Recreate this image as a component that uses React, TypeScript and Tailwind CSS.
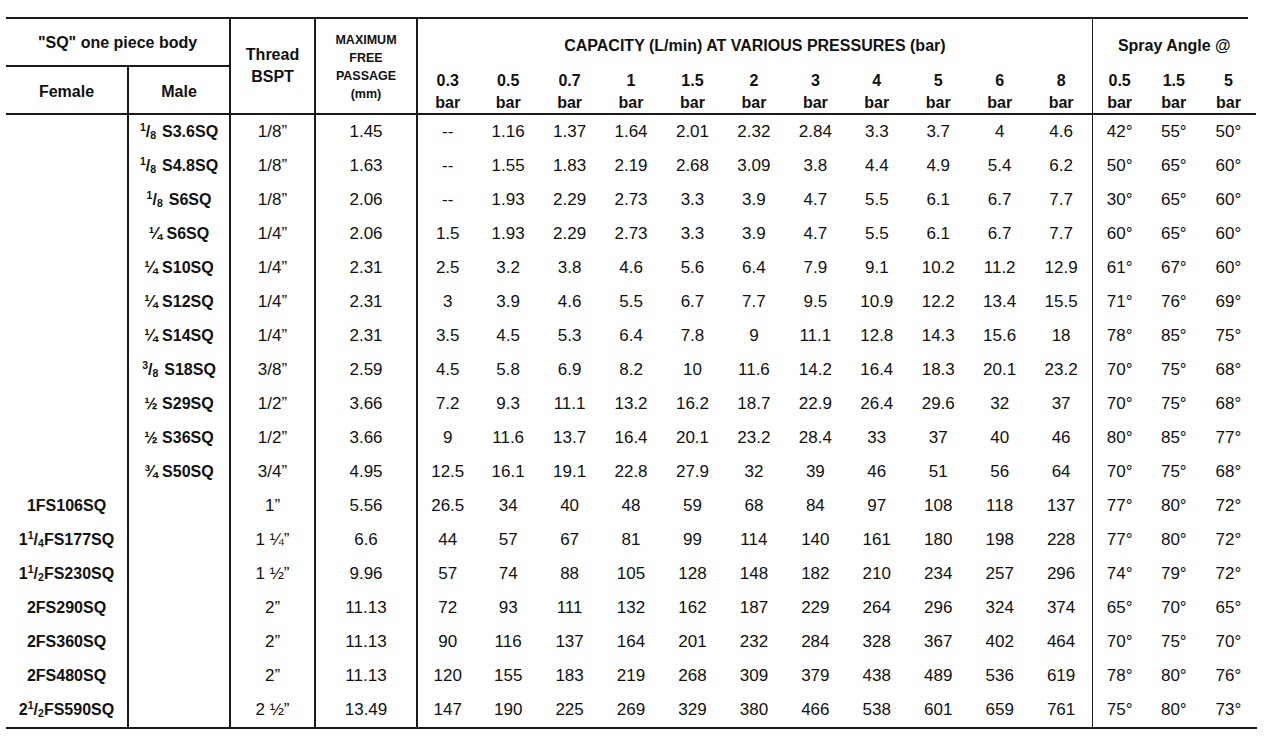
import React from "react";

type Row = {
  female?: React.ReactNode;
  male?: React.ReactNode;
  thread: string;
  pass: string;
  cap: string[];
  spray: string[];
};

const Frac = ({ n, d, gap }: { n: string; d: string; gap?: boolean }) => (
  <span className={gap ? "mr-[6px]" : ""}>
    <sup className="text-[10.5px] top-[-0.6em]">{n}</sup>/<sub className="text-[10.5px] bottom-[-0.2em]">{d}</sub>
  </span>
);

const rows: Row[] = [
  { male: <><Frac n="1" d="8" gap />S3.6SQ</>, thread: "1/8”", pass: "1.45", cap: ["--", "1.16", "1.37", "1.64", "2.01", "2.32", "2.84", "3.3", "3.7", "4", "4.6"], spray: ["42°", "55°", "50°"] },
  { male: <><Frac n="1" d="8" gap />S4.8SQ</>, thread: "1/8”", pass: "1.63", cap: ["--", "1.55", "1.83", "2.19", "2.68", "3.09", "3.8", "4.4", "4.9", "5.4", "6.2"], spray: ["50°", "65°", "60°"] },
  { male: <><Frac n="1" d="8" gap />S6SQ</>, thread: "1/8”", pass: "2.06", cap: ["--", "1.93", "2.29", "2.73", "3.3", "3.9", "4.7", "5.5", "6.1", "6.7", "7.7"], spray: ["30°", "65°", "60°"] },
  { male: <>¼ S6SQ</>, thread: "1/4”", pass: "2.06", cap: ["1.5", "1.93", "2.29", "2.73", "3.3", "3.9", "4.7", "5.5", "6.1", "6.7", "7.7"], spray: ["60°", "65°", "60°"] },
  { male: <>¼ S10SQ</>, thread: "1/4”", pass: "2.31", cap: ["2.5", "3.2", "3.8", "4.6", "5.6", "6.4", "7.9", "9.1", "10.2", "11.2", "12.9"], spray: ["61°", "67°", "60°"] },
  { male: <>¼ S12SQ</>, thread: "1/4”", pass: "2.31", cap: ["3", "3.9", "4.6", "5.5", "6.7", "7.7", "9.5", "10.9", "12.2", "13.4", "15.5"], spray: ["71°", "76°", "69°"] },
  { male: <>¼ S14SQ</>, thread: "1/4”", pass: "2.31", cap: ["3.5", "4.5", "5.3", "6.4", "7.8", "9", "11.1", "12.8", "14.3", "15.6", "18"], spray: ["78°", "85°", "75°"] },
  { male: <><Frac n="3" d="8" gap />S18SQ</>, thread: "3/8”", pass: "2.59", cap: ["4.5", "5.8", "6.9", "8.2", "10", "11.6", "14.2", "16.4", "18.3", "20.1", "23.2"], spray: ["70°", "75°", "68°"] },
  { male: <>½ S29SQ</>, thread: "1/2”", pass: "3.66", cap: ["7.2", "9.3", "11.1", "13.2", "16.2", "18.7", "22.9", "26.4", "29.6", "32", "37"], spray: ["70°", "75°", "68°"] },
  { male: <>½ S36SQ</>, thread: "1/2”", pass: "3.66", cap: ["9", "11.6", "13.7", "16.4", "20.1", "23.2", "28.4", "33", "37", "40", "46"], spray: ["80°", "85°", "77°"] },
  { male: <>¾ S50SQ</>, thread: "3/4”", pass: "4.95", cap: ["12.5", "16.1", "19.1", "22.8", "27.9", "32", "39", "46", "51", "56", "64"], spray: ["70°", "75°", "68°"] },
  { female: <>1FS106SQ</>, thread: "1”", pass: "5.56", cap: ["26.5", "34", "40", "48", "59", "68", "84", "97", "108", "118", "137"], spray: ["77°", "80°", "72°"] },
  { female: <>1<Frac n="1" d="4" />FS177SQ</>, thread: "1 ¼”", pass: "6.6", cap: ["44", "57", "67", "81", "99", "114", "140", "161", "180", "198", "228"], spray: ["77°", "80°", "72°"] },
  { female: <>1<Frac n="1" d="2" />FS230SQ</>, thread: "1 ½”", pass: "9.96", cap: ["57", "74", "88", "105", "128", "148", "182", "210", "234", "257", "296"], spray: ["74°", "79°", "72°"] },
  { female: <>2FS290SQ</>, thread: "2”", pass: "11.13", cap: ["72", "93", "111", "132", "162", "187", "229", "264", "296", "324", "374"], spray: ["65°", "70°", "65°"] },
  { female: <>2FS360SQ</>, thread: "2”", pass: "11.13", cap: ["90", "116", "137", "164", "201", "232", "284", "328", "367", "402", "464"], spray: ["70°", "75°", "70°"] },
  { female: <>2FS480SQ</>, thread: "2”", pass: "11.13", cap: ["120", "155", "183", "219", "268", "309", "379", "438", "489", "536", "619"], spray: ["78°", "80°", "76°"] },
  { female: <>2<Frac n="1" d="2" />FS590SQ</>, thread: "2 ½”", pass: "13.49", cap: ["147", "190", "225", "269", "329", "380", "466", "538", "601", "659", "761"], spray: ["75°", "80°", "73°"] },
];

const capHeads = ["0.3", "0.5", "0.7", "1", "1.5", "2", "3", "4", "5", "6", "8"];
const sprayHeads = ["0.5", "1.5", "5"];

const cell = "flex items-center justify-center text-center";

export default function App() {
  return (
    <div className="w-[1271px] h-[738px] bg-white pt-[17px] pl-[6px] text-[#111] font-['Liberation_Sans',Arial,sans-serif] overflow-hidden">
      <div className="w-[1242px] h-[2px] bg-[#1a1a1a]" />
      <div className="grid w-[1251px] grid-cols-[121px_102px_85px_102px_repeat(11,61.45px)_repeat(3,54.67px)] grid-rows-[48px_48px_repeat(18,34px)] border-b-2 border-[#1a1a1a]">
        {/* header row 1 */}
        <div className={`${cell} col-span-2 border-b-2 border-[#1a1a1a] text-[16px] font-bold pt-[2px]`}>"SQ" one piece body</div>
        <div className={`${cell} row-span-2 border-l-2 border-b-2 border-[#1a1a1a] text-[16px] font-bold leading-[22px]`}>
          Thread<br />BSPT
        </div>
        <div className={`${cell} row-span-2 border-l-2 border-b-2 border-[#1a1a1a] text-[12.5px] font-bold leading-[18px] pt-[1px]`}>
          MAXIMUM<br />FREE<br />PASSAGE<br />(mm)
        </div>
        <div className={`${cell} col-span-11 border-l-2 border-[#1a1a1a] text-[16px] font-bold pt-[5px]`}>
          CAPACITY (L/min) AT VARIOUS PRESSURES (bar)
        </div>
        <div className={`${cell} col-span-3 border-l border-[#1a1a1a] text-[16px] font-bold pt-[5px]`}>Spray Angle @</div>

        {/* header row 2 */}
        <div className={`${cell} border-b-2 border-[#1a1a1a] text-[16px] font-bold pt-[3px]`}>Female</div>
        <div className={`${cell} border-l-2 border-b-2 border-[#1a1a1a] text-[16px] font-bold pt-[3px]`}>Male</div>
        {capHeads.map((h, i) => (
          <div
            key={"c" + i}
            className={`${cell} border-b-2 border-[#1a1a1a] text-[16px] font-bold leading-[22px] pt-[3px] ${i === 0 ? "border-l-2" : ""}`}
          >
            {h}
            <br />
            bar
          </div>
        ))}
        {sprayHeads.map((h, i) => (
          <div
            key={"s" + i}
            className={`${cell} border-b-2 border-[#1a1a1a] text-[16px] font-bold leading-[22px] pt-[3px] ${i === 0 ? "border-l" : ""}`}
          >
            {h}
            <br />
            bar
          </div>
        ))}

        {/* data rows */}
        {rows.map((r, ri) => (
          <React.Fragment key={ri}>
            <div className={`${cell} text-[16px] font-bold whitespace-nowrap`}>{r.female}</div>
            <div className={`${cell} border-l-2 border-[#1a1a1a] text-[16px] font-bold whitespace-nowrap`}>{r.male}</div>
            <div className={`${cell} border-l-2 border-[#1a1a1a] text-[17px]`}>{r.thread}</div>
            <div className={`${cell} border-l-2 border-[#1a1a1a] text-[17px]`}>{r.pass}</div>
            {r.cap.map((v, i) => (
              <div key={"v" + i} className={`${cell} text-[17px] ${i === 0 ? "border-l-2 border-[#1a1a1a]" : ""}`}>
                {v}
              </div>
            ))}
            {r.spray.map((v, i) => (
              <div key={"a" + i} className={`${cell} text-[17px] ${i === 0 ? "border-l border-[#1a1a1a]" : ""}`}>
                {v}
              </div>
            ))}
          </React.Fragment>
        ))}
      </div>
    </div>
  );
}
